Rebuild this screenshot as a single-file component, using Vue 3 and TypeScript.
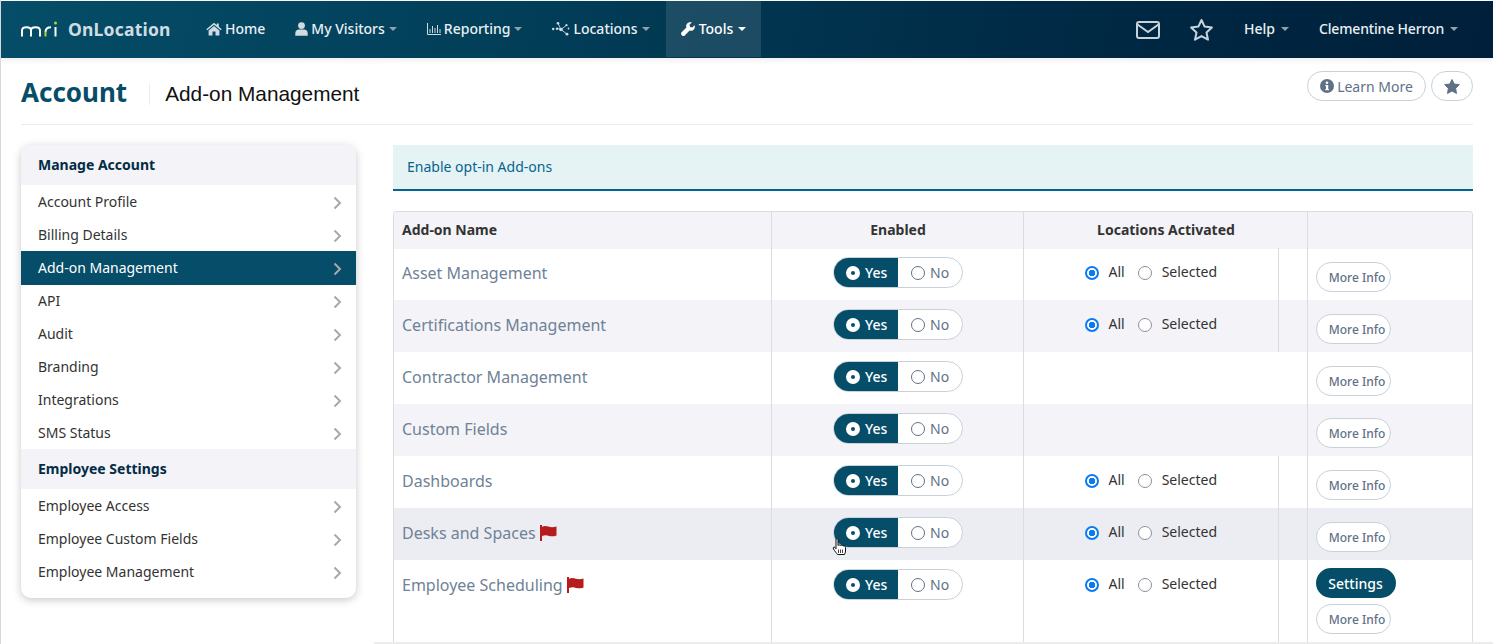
<script setup lang="ts">
interface MenuGroup {
  title: string
  items: string[]
}

interface Addon {
  name: string
  flag?: boolean
  locations: boolean
  settings?: boolean
  hover?: boolean
}

const navItems = [
  { label: 'Home', icon: 'home', caret: false },
  { label: 'My Visitors', icon: 'user', caret: true },
  { label: 'Reporting', icon: 'chart', caret: true },
  { label: 'Locations', icon: 'nodes', caret: true },
  { label: 'Tools', icon: 'wrench', caret: true, active: true },
]

const menu: MenuGroup[] = [
  {
    title: 'Manage Account',
    items: ['Account Profile', 'Billing Details', 'Add-on Management', 'API', 'Audit', 'Branding', 'Integrations', 'SMS Status'],
  },
  {
    title: 'Employee Settings',
    items: ['Employee Access', 'Employee Custom Fields', 'Employee Management'],
  },
]

const addons: Addon[] = [
  { name: 'Asset Management', locations: true },
  { name: 'Certifications Management', locations: true },
  { name: 'Contractor Management', locations: false },
  { name: 'Custom Fields', locations: false },
  { name: 'Dashboards', locations: true },
  { name: 'Desks and Spaces', flag: true, locations: true, hover: true },
  { name: 'Employee Scheduling', flag: true, locations: true, settings: true },
]
</script>

<template>
  <div class="page">
    <header class="navbar">
      <div class="brand">
        <svg class="logo" viewBox="0 0 36 16" width="36" height="16">
          <path d="M1 15.500V9.500C1 5 10 5 10 9.500V15.500M10 9.500C10 5 19 5 19 9.500V15.500" fill="none" stroke="#fff" stroke-width="2" />
          <path d="M24.500 11C24.500 7.500 26.500 6.300 30 6.300" fill="none" stroke="#fff" stroke-width="2" />
          <path d="M24.500 10.500V15.500" fill="none" stroke="#b5d334" stroke-width="2" />
          <path d="M34.500 6V15.500" fill="none" stroke="#fff" stroke-width="2" />
          <circle cx="34.500" cy="2" r="1.500" fill="#b5d334" />
        </svg>
        <span class="brand-name">OnLocation</span>
      </div>
      <nav class="nav-main">
        <a v-for="item in navItems" :key="item.label" class="nav-item" :class="{ active: item.active }">
          <svg v-if="item.icon === 'home'" class="nav-icon" width="16" height="14" viewBox="0 0 16 14">
            <path d="M8 0.8 0.3 7.2l1 1.1L8 2.8l6.700 5.500 1-1.100L12.800 4.800V1.400h-2v1.700z" fill="#cfdde3" />
            <path d="M8 4 2.600 8.400V13.400h3.900V9.600h3v3.800h3.900V8.400z" fill="#cfdde3" />
          </svg>
          <svg v-else-if="item.icon === 'user'" class="nav-icon" width="13" height="14" viewBox="0 0 13 14">
            <circle cx="6.500" cy="3.600" r="3.400" fill="#cfdde3" />
            <path d="M0.300 13.800V11c0-2.400 1.800-3.600 3.400-3.600h5.600c1.600 0 3.400 1.200 3.400 3.600v2.800z" fill="#cfdde3" />
          </svg>
          <svg v-else-if="item.icon === 'chart'" class="nav-icon" width="14" height="12" viewBox="0 0 14 12">
            <path d="M.5 0v11.500H14" fill="none" stroke="#cfdde3" />
            <path d="M3 6v4M5.500 3v7M8 5v5M10.500 2v8M13 6v4" fill="none" stroke="#cfdde3" />
          </svg>
          <svg v-else-if="item.icon === 'nodes'" class="nav-icon" width="18" height="14" viewBox="0 0 18 14">
            <g fill="#cfdde3">
              <circle cx="1.200" cy="7" r="1.200" />
              <circle cx="5" cy="6.800" r="1.200" />
              <circle cx="6" cy="1.300" r="1.300" />
              <circle cx="9" cy="7.500" r="1.800" />
              <circle cx="14.500" cy="3.200" r="1.100" />
              <circle cx="16.500" cy="6.500" r="0.900" />
              <circle cx="15" cy="12.200" r="1.400" />
            </g>
            <path d="M6 1.300 9 7.500 15 12.200M9 7.500 14.500 3.200M5 6.800H9" fill="none" stroke="#cfdde3" stroke-width=".9" />
          </svg>
          <svg v-else class="nav-icon" width="14" height="14" viewBox="0 0 14 14">
            <path d="M13.600 3.200 11.300 5.500 9 5 8.500 2.700 10.800.4C8.900-.2 6.800.4 5.800 2c-.7 1.100-.8 2.300-.4 3.400L.6 10.200c-.7.7-.7 1.900 0 2.700l.5.5c.8.7 2 .7 2.700 0l4.800-4.800c1.100.4 2.300.3 3.400-.4 1.600-1 2.200-3.100 1.600-5z" fill="#fff" />
          </svg>
          <span>{{ item.label }}</span>
          <i v-if="item.caret" class="caret" />
        </a>
      </nav>
      <div class="nav-right">
        <svg class="mail" width="24" height="18" viewBox="0 0 24 18">
          <rect x="1" y="1" width="22" height="16" rx="2" fill="none" stroke="#c6d3da" stroke-width="2" />
          <path d="M1.500 3.500 12 11 22.500 3.500" fill="none" stroke="#c6d3da" stroke-width="2" />
        </svg>
        <svg class="star" width="25" height="24" viewBox="0 0 25 24">
          <path d="M12.500 2 15.600 8.600 22.900 9.500 17.500 14.500 19 21.700 12.500 18.100 6 21.700 7.500 14.500 2.100 9.500 9.400 8.600z" fill="none" stroke="#c6d3da" stroke-width="2" stroke-linejoin="round" />
        </svg>
        <a class="nav-item plain help">Help <i class="caret" /></a>
        <a class="nav-item plain user-name">Clementine Herron <i class="caret" /></a>
      </div>
    </header>

    <div class="title-bar">
      <h1 class="section">Account</h1>
      <h2 class="subtitle">Add-on Management</h2>
      <div class="title-actions">
        <button class="pill learn">
          <svg width="14" height="14" viewBox="0 0 14 14">
            <circle cx="7" cy="7" r="7" fill="#5f7186" />
            <rect x="6" y="6" width="2.200" height="5" fill="#fff" />
            <rect x="5.300" y="10" width="3.600" height="1.200" fill="#fff" />
            <rect x="5.300" y="6" width="2.500" height="1.100" fill="#fff" />
            <circle cx="7" cy="3.800" r="1.300" fill="#fff" />
          </svg>
          Learn More
        </button>
        <button class="pill fav">
          <svg width="16" height="15" viewBox="0 0 16 15">
            <path d="M8 .5 10.200 5 15.300 5.700 11.600 9.300 12.500 14.400 8 12 3.500 14.400 4.400 9.300 .7 5.700 5.800 5z" fill="#5f7186" stroke="#5f7186" stroke-linejoin="round" />
          </svg>
        </button>
      </div>
    </div>

    <div class="content">
      <aside class="side-menu">
        <template v-for="group in menu" :key="group.title">
          <div class="side-head">{{ group.title }}</div>
          <a
            v-for="item in group.items"
            :key="item"
            class="side-item"
            :class="{ current: item === 'Add-on Management' }"
          >
            <span>{{ item }}</span>
            <svg width="9" height="14" viewBox="0 0 9 14">
              <path d="M1.500 1.500 7 7 1.500 12.500" fill="none" stroke="#a9a9ac" stroke-width="2" />
            </svg>
          </a>
        </template>
      </aside>

      <main class="main">
        <div class="notice">Enable opt-in Add-ons</div>
        <div class="table-wrap">
          <table class="addons">
            <colgroup>
              <col class="c-name">
              <col class="c-enabled">
              <col class="c-loc">
              <col class="c-gap">
              <col class="c-action">
            </colgroup>
            <thead>
              <tr>
                <th class="left">Add-on Name</th>
                <th>Enabled</th>
                <th colspan="2">Locations Activated</th>
                <th />
              </tr>
            </thead>
            <tbody>
              <tr v-for="addon in addons" :key="addon.name" :class="{ hovered: addon.hover, tall: addon.settings }">
                <td class="name">
                  <span>{{ addon.name }}</span>
                  <svg v-if="addon.flag" class="flag" width="17" height="16" viewBox="0 0 17 16">
                    <rect x="0" y="0" width="2" height="16" fill="#b71c1c" />
                    <path d="M2 1.800C5 .3 7 1.200 9 1.800 11.500 2.500 14 2.200 16.500 1.400V10.400C14 11.600 11.500 11.600 9 10.900 7 10.300 5 9.900 2 11.100z" fill="#b71c1c" />
                  </svg>
                </td>
                <td class="enabled">
                  <div class="toggle-wrap">
                    <div class="toggle">
                      <span class="opt yes"><i class="dot" />Yes</span>
                      <span class="opt no"><i class="ring" />No</span>
                    </div>
                    <svg v-if="addon.hover" class="cursor" width="15" height="18" viewBox="0 0 15 18">
                      <path d="M4 1.500C4 .5 6 .5 6 1.500V7.500C6.500 6.800 8 6.800 8.500 7.500 9 7 10.500 7 11 8 11.500 7.700 13.500 8 13.500 9.500V13C13.500 14.500 13 15.500 12.500 16.500H5.500C4.500 15 3 13.500 1.500 11 .5 9.500 2 8.500 3 9.500L4 10.800z" fill="#fff" stroke="#111" stroke-width="1" stroke-linejoin="round" />
                      <path d="M6.500 11.500V15M8.500 11.500V15M10.500 11.500V15" fill="none" stroke="#111" stroke-width=".8" />
                    </svg>
                  </div>
                </td>
                <template v-if="addon.locations">
                  <td class="loc">
                    <div class="radios">
                      <i class="radio on" /><span>All</span>
                      <i class="radio off" /><span>Selected</span>
                    </div>
                  </td>
                  <td class="gap" />
                </template>
                <td v-else class="blank" colspan="2" />
                <td class="action">
                  <button v-if="addon.settings" class="settings">Settings</button>
                  <button class="more">More Info</button>
                </td>
              </tr>
            </tbody>
          </table>
        </div>
      </main>
    </div>
  </div>
</template>

<style scoped>
.page {
  position: relative;
  width: 1493px;
  height: 644px;
  box-sizing: border-box;
  overflow: hidden;
  padding-top: 1px;
  border-left: 1px solid #d8d8d8;
  font-family: "Noto Sans", sans-serif;
  font-size: 14px;
  color: #333;
  background: #fff;
}

/* strip along the bottom edge of the capture */
.page::after {
  content: "";
  position: absolute;
  left: 373px;
  right: 0;
  bottom: 0;
  height: 2px;
  background: #ececec;
}

.navbar {
  display: flex;
  align-items: stretch;
  height: 57px;
  background: linear-gradient(100deg, #054d68 0%, #023e58 35%, #002a45 70%, #001f3a 100%);
  box-shadow: 0 2px 6px rgba(0, 0, 0, 0.08);
}

.brand {
  display: flex;
  align-items: center;
  gap: 11px;
  flex: none;
  width: 190px;
  box-sizing: border-box;
  padding: 0 0 2px 20px;
}

.logo {
  display: block;
}

.brand-name {
  font-size: 17.500px;
  font-weight: 700;
  color: #cfdde3;
  letter-spacing: 0.2px;
}

.nav-main {
  display: flex;
}

.nav-item {
  display: flex;
  align-items: center;
  gap: 3px;
  padding: 0 15px 2px;
  color: #e9f0f3;
  font-size: 14px;
  font-weight: 500;
  white-space: nowrap;
}

.nav-item.active {
  gap: 4px;
  background: rgba(255, 255, 255, 0.11);
  color: #fff;
  margin-left: 1px;
  margin-bottom: 1px;
  padding-bottom: 1px;
}

.nav-icon {
  display: block;
}

.caret {
  display: inline-block;
  width: 0;
  height: 0;
  margin-left: 1px;
  border-left: 4px solid transparent;
  border-right: 4px solid transparent;
  border-top: 4px solid #8fa3ad;
}

.active .caret {
  border-top-color: #fff;
}

.nav-right {
  display: flex;
  align-items: center;
  margin-left: auto;
  padding-right: 35px;
}

.mail {
  margin-right: 29px;
}

.star {
  margin-right: 30px;
}

.nav-item.plain {
  padding: 0 0 2px;
  height: 100%;
  box-sizing: border-box;
  gap: 0;
}

.nav-item.plain .caret {
  margin-left: 6px;
}

.user-name {
  letter-spacing: -0.16px;
}

.help {
  margin-right: 30px;
}

.title-bar {
  display: flex;
  align-items: center;
  height: 67px;
  margin: 0 20px;
  padding-top: 3px;
  border-bottom: 1px solid #ececec;
  box-sizing: border-box;
}

.section {
  margin: 0 0 2px;
  padding-right: 22px;
  font-size: 26px;
  font-weight: 700;
  color: #054d68;
}

.subtitle {
  margin: 2px 0 0;
  padding-left: 15px;
  border-left: 1px solid #ececec;
  font-family: "Liberation Sans", Arial, sans-serif;
  font-size: 20.800px;
  font-weight: 400;
  line-height: 22px;
  color: #111;
}

.title-actions {
  display: flex;
  gap: 5px;
  margin-left: auto;
  margin-top: -13px;
}

.pill {
  display: flex;
  align-items: center;
  justify-content: center;
  height: 30px;
  box-sizing: border-box;
  border: 1px solid #c7d2d8;
  border-radius: 15px;
  background: #fff;
  font-family: inherit;
  font-size: 14px;
  color: #5f7186;
}

.learn {
  gap: 3px;
  width: 119px;
  padding: 0;
}

.fav {
  width: 42px;
  padding: 0;
}

.content {
  display: flex;
  align-items: flex-start;
  padding: 20px 20px 0 20px;
}

.side-menu {
  flex: none;
  width: 335px;
  margin-right: 37px;
  padding-bottom: 10px;
  border-radius: 10px;
  overflow: hidden;
  background: #fff;
  box-shadow: 0 2px 8px rgba(0, 0, 0, 0.22);
}

.side-head {
  display: flex;
  align-items: center;
  height: 40px;
  box-sizing: border-box;
  padding: 0 0 2px 17px;
  background: #f3f3f8;
  font-weight: 700;
  font-size: 14px;
  color: #032c45;
}

.side-item {
  display: flex;
  align-items: center;
  justify-content: space-between;
  height: 33px;
  padding: 0 14px 0 17px;
  color: #333;
}

.side-item svg {
  margin-top: 2px;
}

.side-item.current {
  background: #054d68;
  color: #fff;
  height: 33px;
  padding-bottom: 1px;
  margin-bottom: -1px;
}

.main {
  flex: 1;
  min-width: 0;
}

.notice {
  display: flex;
  align-items: center;
  height: 42px;
  padding: 0 0 2px 14px;
  background: #e5f3f4;
  border-bottom: 2px solid #05648f;
  color: #05648f;
}

.table-wrap {
  margin-top: 20px;
  border: 1px solid #dcdcdf;
  border-bottom: 0;
  border-radius: 4px 4px 0 0;
  overflow: hidden;
}

.addons {
  width: 100%;
  border-collapse: collapse;
  table-layout: fixed;
}

.c-name { width: 377px; }
.c-enabled { width: 252px; }
.c-loc { width: 255px; }
.c-gap { width: 29px; }
.c-action { width: 166px; }

th {
  height: 36px;
  padding: 0 0 1px 2px;
  box-sizing: border-box;
  background: #f3f3f8;
  font-size: 14px;
  font-weight: 700;
  color: #333;
  border-left: 1px solid #dcdcdf;
}

th.left {
  padding-left: 8px;
  text-align: left;
  border-left: 0;
}

td {
  height: 52px;
  box-sizing: border-box;
  padding: 0;
  border-left: 1px solid #dcdcdf;
  vertical-align: top;
}

/* header band reaches 1px into the first row */
tbody tr:first-child td {
  background: linear-gradient(#f3f3f8 1px, #fff 1px);
}

tbody tr:nth-child(even) td {
  background: #f3f3f8;
}

tbody tr.hovered td {
  background: #ecedf3;
}

tr.tall td {
  height: 82px;
}

td.name {
  padding: 13px 0 0 8px;
  border-left: 0;
  font-size: 16px;
  line-height: 24px;
  color: #6f8296;
}

.flag {
  margin-left: 4px;
  vertical-align: -2px;
}

.enabled {
  padding: 9px 0 0 2px;
}

.toggle-wrap {
  position: relative;
  width: 130px;
  margin: 0 auto;
}

.cursor {
  position: absolute;
  left: -1px;
  top: 21px;
}

.toggle {
  display: flex;
  height: 31px;
  box-sizing: border-box;
  border: 1px solid #c7d2d8;
  border-radius: 16px;
  overflow: hidden;
  background: #fff;
}

.opt {
  display: flex;
  align-items: center;
  font-size: 14px;
  font-weight: 500;
}

.yes {
  width: 65px;
  padding-left: 13px;
  box-sizing: border-box;
  gap: 5px;
  margin: -1px 0 -1px -1px;
  background: #054d68;
  color: #fff;
}

.no {
  padding-left: 13px;
  gap: 5px;
  color: #5f7186;
  font-weight: 400;
}

.dot {
  width: 14px;
  height: 14px;
  box-sizing: border-box;
  border: 5px solid #fff;
  border-radius: 50%;
  background: #054d68;
}

.ring {
  width: 14px;
  height: 14px;
  box-sizing: border-box;
  border: 1.500px solid #5f7186;
  border-radius: 50%;
}

.radios {
  display: flex;
  align-items: center;
  padding: 17px 0 0 61px;
  line-height: 18px;
  color: #333;
}

.radios span {
  margin-top: -2px;
}

.radio {
  flex: none;
  width: 14px;
  height: 14px;
  box-sizing: border-box;
  border-radius: 50%;
  background: #fff;
  margin-right: 10px;
}

.radio.on {
  border: 2px solid #0a7bf0;
  background: radial-gradient(circle, #0a7bf0 0 3px, #fff 3.500px);
}

.radio.off {
  margin-left: 13px;
  margin-right: 10px;
  border: 1.500px solid #8f8f9c;
}

.action {
  padding-top: 14px;
  padding-left: 8px;
}

.more,
.settings {
  display: block;
  height: 30px;
  box-sizing: border-box;
  padding: 0;
  border-radius: 15px;
  font-family: inherit;
}

.more {
  width: 75px;
  padding-left: 8px;
  border: 1px solid #c7d2d8;
  background: #fff;
  font-size: 12px;
  font-weight: 500;
  color: #5f7186;
}

.settings {
  width: 80px;
  margin: -6px 0 6px;
  border: 0;
  background: #054d68;
  font-size: 14px;
  font-weight: 500;
  color: #fff;
}
</style>

<style>
html,
body {
  margin: 0;
  background: #fff;
}
</style>
